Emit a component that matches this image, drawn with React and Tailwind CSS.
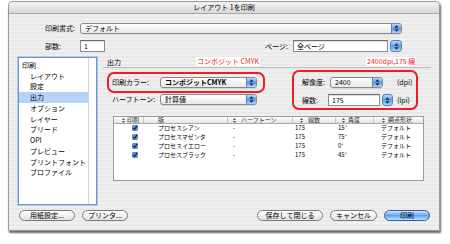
import React from "react";

function Arrows() {
  return (
    <svg width="5" height="7" viewBox="0 0 5 7">
      <path d="M2.5 0.3L4.6 2.8H0.4Z M2.5 6.7L4.6 4.2H0.4Z" fill="#14284a" />
    </svg>
  );
}

function SortArrows() {
  return (
    <svg width="3" height="5" viewBox="0 0 3 5" className="shrink-0">
      <path d="M1.5 0L3 2H0Z M1.5 5L3 3H0Z" fill="#555" />
    </svg>
  );
}

function Popup({ w, text, bold }) {
  return (
    <div className={`flex h-[11px] ${w} overflow-hidden rounded-[3px] border border-[#8a8a8a] bg-gradient-to-b from-white to-[#e9e9e9] shadow-[0_1px_0_rgba(0,0,0,0.08)]`}>
      <div className={`flex flex-1 items-center pl-[4px] leading-none whitespace-nowrap ${bold ? "font-bold" : ""}`}>{text}</div>
      <div className="flex w-[10px] items-center justify-center border-l border-[#5b84bd] bg-gradient-to-b from-[#b9d8fb] via-[#5b9be6] to-[#a8d2fb]">
        <Arrows />
      </div>
    </div>
  );
}

function Stepper({ w, h }) {
  return (
    <div className={`flex ${w} ${h} items-center justify-center rounded-[3px] border border-[#5b84bd] bg-gradient-to-b from-[#b9d8fb] via-[#5b9be6] to-[#a8d2fb]`}>
      <Arrows />
    </div>
  );
}

function Field({ w, h, text }) {
  return (
    <div className={`flex ${w} ${h} items-center border border-[#8c8c8c] border-t-[#6e6e6e] bg-white pl-[3px] leading-none shadow-[inset_0_1px_1px_rgba(0,0,0,0.15)]`}>
      {text}
    </div>
  );
}

function Button({ w, text, def }) {
  return (
    <div
      className={`flex h-[11px] ${w} items-center justify-center rounded-full border leading-none whitespace-nowrap ${
        def
          ? "border-[#2f5da8] bg-gradient-to-b from-[#cfe6ff] via-[#5fa2ec] to-[#b6e0ff]"
          : "border-[#7a7a7a] bg-gradient-to-b from-white via-[#f1f1f1] to-[#e2e2e2]"
      }`}
    >
      {text}
    </div>
  );
}

function Check() {
  return (
    <svg width="6" height="6" viewBox="0 0 6 6">
      <rect x="0.5" y="0.5" width="5" height="5" rx="0.8" fill="#5d93df" stroke="#2e5b9e" strokeWidth="0.6" />
      <path d="M1.3 3L2.5 4.4L5.2 0.6" fill="none" stroke="#0d1d3a" strokeWidth="1.1" />
    </svg>
  );
}

const listItems = [
  { t: "印刷", indent: false },
  { t: "レイアウト", indent: true },
  { t: "設定", indent: true },
  { t: "出力", indent: true, sel: true },
  { t: "オプション", indent: true },
  { t: "レイヤー", indent: true },
  { t: "ブリード", indent: true },
  { t: "OPI", indent: true },
  { t: "プレビュー", indent: true },
  { t: "プリントフォント", indent: true },
  { t: "プロファイル", indent: true },
];

const rows = [
  ["プロセスシアン", "15°"],
  ["プロセスマゼンタ", "75°"],
  ["プロセスイエロー", "0°"],
  ["プロセスブラック", "45°"],
];

export default function App() {
  return (
    <div className="relative h-[244px] w-[450px] overflow-hidden bg-white font-['Noto_Sans_CJK_JP',sans-serif] text-[7px] text-black">
      <div className="ml-[8px] mt-[1px] flex h-[230px] w-[432px] flex-col rounded-t-[4px] border border-[#9a9a9a] bg-[repeating-linear-gradient(to_bottom,#efefef_0px,#efefef_2px,#e9e9e9_2px,#e9e9e9_4px)] shadow-[1px_2px_2px_rgba(0,0,0,0.6)]">
        {/* title bar */}
        <div className="flex h-[12px] items-center justify-center rounded-t-[4px] border-b border-[#a6a6a6] bg-gradient-to-b from-[#f3f3f3] to-[#d9d9d9] leading-none">
          レイアウト 1を印刷
        </div>

        {/* row 1 */}
        <div className="mt-[9px] flex h-[11px] items-center pl-[36px]">
          <span className="w-[35px] whitespace-nowrap">印刷書式:</span>
          <Popup w="w-[322px]" text="デフォルト" />
        </div>

        {/* row 2 */}
        <div className="mt-[6px] flex h-[12px] items-center pl-[36px]">
          <span className="w-[35px] whitespace-nowrap">部数:</span>
          <Field w="w-[25px]" h="h-[12px]" text="1" />
          <span className="ml-[160px] w-[28px] whitespace-nowrap">ページ:</span>
          <Field w="w-[95px]" h="h-[12px]" text="全ページ" />
          <div className="ml-[2px]">
            <Stepper w="w-[12px]" h="h-[12px]" />
          </div>
        </div>

        {/* main */}
        <div className="mt-[5px] flex h-[148px]">
          {/* list box */}
          <div className="ml-[9px] flex w-[79px] border border-[#6f93c6] bg-white shadow-[0_0_0_1px_#aecaee]">
            <div className="flex flex-1 flex-col pt-[2px]">
              {listItems.map((it) => (
                <div
                  key={it.t}
                  className={`flex h-[10.75px] items-center whitespace-nowrap leading-none ${it.indent ? "pl-[11px]" : "pl-[3px]"} ${it.sel ? "bg-[#b5d3f7]" : ""}`}
                >
                  {it.t}
                </div>
              ))}
            </div>
            <div className="w-[8px] border-l border-[#d4d4d4] bg-white" />
          </div>

          {/* right panel */}
          <div className="ml-[6px] flex w-[328px] flex-col">
            <div className="flex h-[11px] items-end border-b border-[#bdbdbd] pb-[1px] pl-[4px] leading-none">出力</div>

            <div className="mt-[9px] flex">
              <div className="flex w-[199px] flex-col pl-[9px]">
                <div className="flex h-[11px] items-center">
                  <span className="w-[48px] whitespace-nowrap">印刷カラー:</span>
                  <Popup w="w-[97px]" text="コンポジットCMYK" bold />
                </div>
                <div className="mt-[6px] flex h-[11px] items-center">
                  <span className="w-[48px] whitespace-nowrap">ハーフトーン:</span>
                  <Popup w="w-[97px]" text="計算値" />
                </div>
              </div>
              <div className="flex flex-col">
                <div className="flex h-[11px] items-center">
                  <span className="w-[28px] whitespace-nowrap">解像度:</span>
                  <Popup w="w-[53px]" text="2400" />
                  <span className="ml-[14px]">(dpi)</span>
                </div>
                <div className="mt-[6px] flex h-[12px] items-center">
                  <span className="w-[26px] whitespace-nowrap">線数:</span>
                  <Field w="w-[52px]" h="h-[12px]" text="175" />
                  <div className="ml-[2px]">
                    <Stepper w="w-[11px]" h="h-[12px]" />
                  </div>
                  <span className="ml-[4px]">(lpi)</span>
                </div>
              </div>
            </div>

            {/* table */}
            <div className="ml-[10px] mt-[10px] flex h-[65px] w-[311px] flex-col border border-[#9c9c9c] bg-white text-[6px] leading-none">
              <div className="flex h-[7px] items-center border-b border-[#a9a9a9] bg-gradient-to-b from-white to-[#e3e3e3] text-[#333]">
                <div className="flex h-full w-[30px] items-center gap-[2px] border-r border-[#c4c4c4] pl-[8px]"><SortArrows />印刷</div>
                <div className="flex h-full w-[84px] items-center border-r border-[#c4c4c4] pl-[14px]">版</div>
                <div className="flex h-full w-[65px] items-center gap-[5px] border-r border-[#c4c4c4] pl-[5px]"><SortArrows />ハーフトーン</div>
                <div className="flex h-full w-[43px] items-center gap-[5px] border-r border-[#c4c4c4] pl-[7px]"><SortArrows />線数</div>
                <div className="flex h-full w-[38px] items-center gap-[3px] border-r border-[#c4c4c4] pl-[6px]"><SortArrows />角度</div>
                <div className="flex h-full flex-1 items-center gap-[3px] pl-[8px]"><SortArrows />網点形状</div>
              </div>
              {rows.map(([name, ang]) => (
                <div key={name} className="flex h-[8.8px] items-center">
                  <div className="flex w-[30px] pl-[18px]"><Check /></div>
                  <div className="w-[84px] pl-[14px] whitespace-nowrap">{name}</div>
                  <div className="w-[65px] pl-[5px]">-</div>
                  <div className="w-[43px] pl-[2px]">175</div>
                  <div className="w-[38px] pl-[2px]">{ang}</div>
                  <div className="flex-1 pl-[7px] whitespace-nowrap">デフォルト</div>
                </div>
              ))}
            </div>
          </div>
        </div>

        {/* buttons */}
        <div className="mt-[5px] flex h-[11px] items-center pl-[10px] pr-[9px]">
          <Button w="w-[56px]" text="用紙設定..." />
          <div className="ml-[7px]">
            <Button w="w-[46px]" text="プリンタ..." />
          </div>
          <div className="ml-auto flex gap-[7px]">
            <Button w="w-[66px]" text="保存して閉じる" />
            <Button w="w-[47px]" text="キャンセル" />
            <Button w="w-[46px]" text="印刷" def />
          </div>
        </div>
      </div>

      {/* red annotations */}
      <div className="absolute left-[196px] top-[57px] bg-white px-[1px] text-[7px] leading-[9px] text-[#ee1c24]">コンポジット CMYK</div>
      <div className="absolute left-[366px] top-[57px] bg-white px-[1px] text-[7px] leading-[9px] text-[#ee1c24]">2400dpi,175 線</div>
      <div className="absolute left-[107px] top-[72px] h-[21px] w-[158px] rounded-[7px] border-2 border-[#ee1c24]" />
      <div className="absolute left-[292px] top-[70px] h-[40px] w-[126px] rounded-[7px] border-2 border-[#ee1c24]" />
    </div>
  );
}
